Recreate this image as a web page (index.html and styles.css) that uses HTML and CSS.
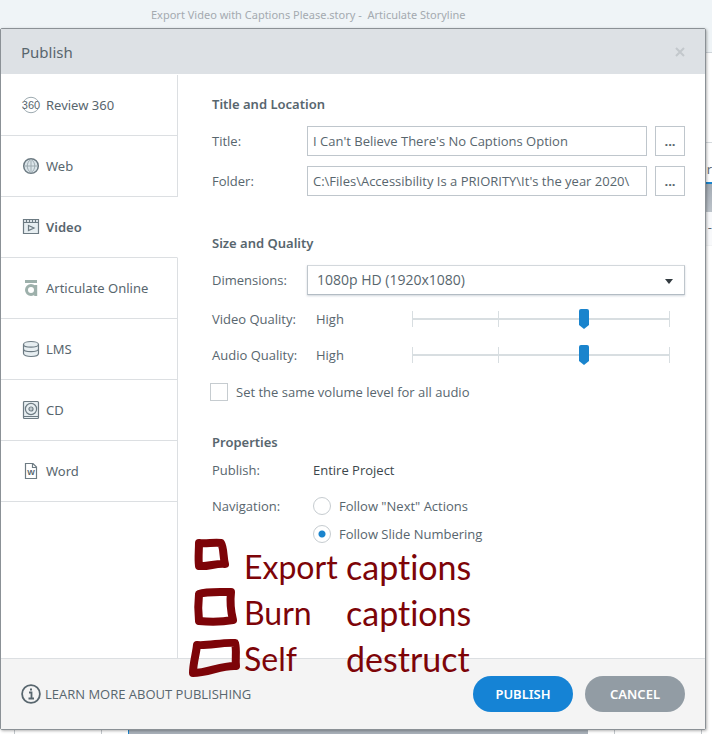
FILE: index.html
```
<!DOCTYPE html>
<html lang="en">
<head>
<meta charset="utf-8">
<title>Publish</title>
<link rel="stylesheet" href="styles.css">
</head>
<body>
<div class="app">
  <div class="app-title">Export Video with Captions Please.story -&nbsp; Articulate Storyline</div>
  <div class="app-ribbon"></div>
  <div class="app-tab">r</div>
  <div class="app-strip"></div>
  <div class="app-tools">-</div>
  <div class="app-bottom">
    <div class="app-list"></div>
    <div class="app-stage"></div>
    <div class="app-panel"></div>
  </div>
</div>

<section class="dialog" role="dialog" aria-labelledby="dialog-title">
  <header class="dialog-head">
    <h1 id="dialog-title">Publish</h1>
    <button class="close" type="button" aria-label="Close">
      <svg width="10" height="10" viewBox="0 0 10 10"><path d="M1 1l8 8M9 1l-8 8"/></svg>
    </button>
  </header>

  <div class="dialog-body">
    <nav class="tabs">
      <a href="#review" class="tab">
        <svg class="icon" viewBox="0 0 20 20"><path class="thin" d="M3 6a8.5 8.5 0 0 1 14 0M3 14a8.500 8.500 0 0 0 14 0"/><text x="10" y="13.600" class="icon-360">360</text></svg>
        Review 360</a>
      <a href="#web" class="tab">
        <svg class="icon" viewBox="0 0 20 20"><circle class="globe" cx="10" cy="10" r="7.3"/><path class="thin" d="M10 3v14M3 10h14M10 3c-5 4-5 10 0 14M10 3c5 4 5 10 0 14"/></svg>
        Web</a>
      <a href="#video" class="tab active">
        <svg class="icon" viewBox="0 0 20 20"><path class="fill" d="M2.500 2.500h15v14h-15z"/><path d="M2.500 5.500h15M5.500 2.500v3M8.500 2.500v3M11.500 2.500v3M14.500 2.500v3M7.500 8.500l5.500 2.500-5.500 2.500z"/></svg>
        Video</a>
      <a href="#online" class="tab">
        <svg class="icon" viewBox="0 0 20 20"><g class="brand"><path d="M4 3.500h12"/><circle cx="10" cy="12" r="4.500"/><path d="M14.700 7v11"/></g></svg>
        Articulate Online</a>
      <a href="#lms" class="tab">
        <svg class="icon" viewBox="0 0 20 20"><path class="fill" d="M2.500 5.500c0-4 15-4 15 0v9c0 4-15 4-15 0z"/><path d="M2.500 5.500c0 3.600 15 3.600 15 0M2.500 10c0 3.600 15 3.600 15 0"/></svg>
        LMS</a>
      <a href="#cd" class="tab">
        <svg class="icon" viewBox="0 0 20 20"><rect class="fill" x="2.500" y="1.500" width="15" height="17" rx="1"/><circle cx="10" cy="9" r="5.600"/><circle cx="10" cy="9" r="2"/><path d="M2.500 16.500h15M10 8.500v1"/></svg>
        CD</a>
      <a href="#word" class="tab">
        <svg class="icon" viewBox="0 0 20 20"><path d="M4.500 2.500h7.500l3.500 3.500v11.500h-11zM11.500 2.500v4h4"/><text x="10" y="14" class="icon-w">W</text></svg>
        Word</a>
    </nav>

    <form class="content" id="publish-form">
      <h2>Title and Location</h2>
      <div class="field">
        <label for="title">Title:</label>
        <input class="box" id="title" type="text" value="I Can't Believe There's No Captions Option">
        <button class="browse" type="button" aria-label="Title details">...</button>
      </div>
      <div class="field">
        <label for="folder">Folder:</label>
        <input class="box" id="folder" type="text" value="C:\Files\Accessibility Is a PRIORITY\It's the year 2020\">
        <button class="browse" type="button" aria-label="Browse folder">...</button>
      </div>

      <h2 class="later">Size and Quality</h2>
      <div class="field wide">
        <label for="dimensions">Dimensions:</label>
        <span class="select-wrap">
          <select class="box" id="dimensions"><option>1080p HD (1920x1080)</option></select>
        </span>
      </div>
      <div class="quality">
        <label for="vq">Video Quality:</label><output for="vq">High</output>
        <input id="vq" type="range" min="0" max="3" value="2">
        <label for="aq">Audio Quality:</label><output for="aq">High</output>
        <input id="aq" type="range" min="0" max="3" value="2">
      </div>
      <label class="check"><input type="checkbox">Set the same volume level for all audio</label>

      <h2 class="last">Properties</h2>
      <dl class="properties">
        <dt>Publish:</dt>
        <dd class="scope">Entire Project</dd>
        <dt>Navigation:</dt>
        <dd class="choices">
          <label class="choice"><input type="radio" name="nav">Follow "Next" Actions</label>
          <label class="choice"><input type="radio" name="nav" checked>Follow Slide Numbering</label>
        </dd>
      </dl>

      <div class="notes">
        <div class="note">
          <svg viewBox="0 0 50 46"><path class="pen" d="M10 3c7 1 15-1 22 0 3 5 2 14 4 21-9-1-17 3-26 2-1-8 0-15 0-23z"/></svg>
          <span>Export</span><span>captions</span>
        </div>
        <div class="note">
          <svg viewBox="0 0 50 46"><path class="pen" d="M10 8c8-3 22-2 32-2-1 9 0 20 2 28-11 2-23 2-34 1-1-9-1-18 0-27z"/></svg>
          <span>Burn</span><span>captions</span>
        </div>
        <div class="note">
          <svg viewBox="0 0 50 46"><path class="pen" d="M8 13c12 1 25-3 38-2 2 8 0 15 1 23-14-1-28 7-43 7 0-10 3-18 4-28z"/></svg>
          <span>Self</span><span>destruct</span>
        </div>
      </div>
    </form>
  </div>

  <footer class="dialog-foot">
    <a class="learn" href="#learn">
      <svg width="20" height="20" viewBox="0 0 20 20"><circle cx="10" cy="10" r="8.900"/><path d="M8 8.500h2.500v5.500M7.500 14.500h5.500"/><path class="dot" d="M9 4.500h2v2h-2z"/></svg>
      LEARN MORE ABOUT PUBLISHING</a>
    <button class="pill primary" type="submit" form="publish-form">PUBLISH</button>
    <button class="pill" type="button">CANCEL</button>
  </footer>
</section>
</body>
</html>
```
FILE: styles.css
```
* { box-sizing: border-box; }

body {
  margin: 0;
  padding: 28px 6px 4px 0;
  min-height: 100vh;
  position: relative;
  font: 13px/18px "Open Sans", "Noto Sans", sans-serif;
  color: #58666e;
  background: #fff;
}

h1, h2, dl, dd { margin: 0; }
button, input, select { font: inherit; color: inherit; margin: 0; }
svg { flex: none; fill: none; }

/* Main window behind the dialog */
.app {
  position: absolute;
  inset: 0;
  display: flex;
  flex-direction: column;
  overflow: hidden;
}
.app-title {
  flex: 0 0 53px;
  padding: 6px 0 0 151px;
  font-family: "Noto Sans", sans-serif;
  font-size: 11px;
  color: #a4aab0;
  background: #eff4f7;
  border-bottom: 1px solid #cfd5da;
}
.app-ribbon { flex: 0 0 90px; border-bottom: 1px solid #d5dade; }
.app-tab {
  flex: 0 0 41px;
  padding: 17px 0 0;
  text-align: right;
  border-bottom: 2px solid #1a84cd;
}
.app-strip { flex: 0 0 28px; background: linear-gradient(#a3abb4, #bcc3ca); }
.app-tools { flex: 1; padding-top: 6px; text-align: right; background: linear-gradient(#f8f9fb 33px, #e3e6e9 33px, #fff 34px); }
.app-bottom { flex: 0 0 10px; display: flex; background: #fff; }
.app-list { flex: 0 0 88px; margin: 0 26px 0 14px; border: solid #c3c8cc; border-width: 0 1px; }
.app-stage { flex: 1; background: #a9b1ba; border-left: 1px solid #1a84cd; }
.app-panel { flex: 0 0 88px; margin: 0 10px 0 26px; border: solid #c3c8cc; border-width: 0 1px; }

/* Dialog */
.dialog {
  position: relative;
  background: #fff;
  border: 1px solid #8b9196;
  border-radius: 2px;
  box-shadow: 1px 1px 3px rgba(0, 0, 0, .3);
}
.dialog-head {
  display: flex;
  align-items: center;
  justify-content: space-between;
  height: 45px;
  padding: 0 20px;
  background: #dde1e5;
}
.dialog-head h1 { font: 400 15px/18px "Noto Sans", sans-serif; }
.close { display: flex; padding: 0; border: 0; background: none; }
.close svg { stroke: #c3c8cc; stroke-width: 2; }

.dialog-body { display: grid; grid-template-columns: 177px 1fr; }

/* Publish targets */
.tabs {
  display: flex;
  flex-direction: column;
  padding-top: 1px;
  font-family: "Noto Sans", sans-serif;
}
.tabs::after { content: ""; flex: 1; border-right: 1px solid #dcdfe2; }
.tab {
  display: flex;
  align-items: center;
  gap: 5px;
  height: 61px;
  padding-left: 20px;
  border: solid #dcdfe2;
  border-width: 0 1px 1px 0;
  color: inherit;
  text-decoration: none;
}
.tab.active { font-weight: 600; border-right-color: transparent; }
.icon { width: 20px; height: 20px; stroke: #6d7b83; stroke-width: 1.2; }
.icon text {
  fill: #58666e;
  stroke: none;
  text-anchor: middle;
  font-family: "Liberation Sans", sans-serif;
}
.icon .icon-360 { font-size: 11px; }
.icon .icon-w { font-size: 8px; font-weight: 700; }
.icon .thin { stroke: #9eabb1; stroke-width: 1; }
.icon .globe { fill: #dbe5ea; stroke-width: 1.5; }
.icon .fill { fill: #e7eef1; }
.icon .brand { stroke: #9db0ab; stroke-width: 3; }

/* Settings */
.content { position: relative; padding: 21px 20px 115px 34px; }
h2 { font: 600 13px/18px "Noto Sans", sans-serif; }
h2.later { margin-top: 38px; }
h2.last { margin-top: 32px; }

.field {
  display: grid;
  grid-template-columns: 87px 1fr 30px;
  gap: 8px;
  align-items: center;
  margin-top: 10px;
}
h2 + .field { margin-top: 13px; }
.field.wide { grid-template-columns: 87px 1fr; }
.box {
  width: 100%;
  height: 30px;
  padding: 0 5px;
  border: 1px solid #bfc6cc;
  border-radius: 0;
  background: #fff;
}
.browse { height: 30px; padding: 0; border: 1px solid #bfc6cc; background: #fff; font-weight: 700; }

.select-wrap { position: relative; display: flex; }
.select-wrap::after {
  content: "";
  position: absolute;
  right: 12px;
  top: 14px;
  border: 4px solid transparent;
  border-top: 5px solid #333b40;
}
select.box {
  appearance: none;
  padding: 0 9px;
  font-size: 14px;
  border-color: #d3d8dc #bfc6cc #b3bcc4;
  box-shadow: 0 1px 2px rgba(100, 120, 140, .3);
}

.quality {
  display: grid;
  grid-template-columns: 96px 1fr 268px;
  column-gap: 8px;
  row-gap: 12px;
  align-items: center;
  margin: 12px 10px 0 0;
}
input[type="range"] {
  appearance: none;
  width: 100%;
  height: 24px;
  background:
    linear-gradient(#d8dee1, #d8dee1) 5px 50% / 1px 16px,
    linear-gradient(#d8dee1, #d8dee1) calc(33.3% + 2px) 50% / 1px 16px,
    linear-gradient(#d8dee1, #d8dee1) calc(100% - 5px) 50% / 1px 16px,
    linear-gradient(#d8dee1, #d8dee1) 50% 50% / calc(100% - 10px) 2px;
  background-repeat: no-repeat;
}
input[type="range"]::-webkit-slider-thumb {
  appearance: none;
  width: 10px;
  height: 20px;
  border-radius: 2px;
  background: #1a84cd;
  clip-path: polygon(0 0, 100% 0, 100% 80%, 50% 100%, 0 80%);
}

.check, .choice { display: flex; align-items: center; gap: 8px; }
.check { margin: 16px 0 0 -2px; }
input[type="checkbox"], input[type="radio"] {
  appearance: none;
  flex: none;
  width: 18px;
  height: 18px;
  border: 1px solid #c6ccd0;
  background: #fff;
}
input[type="radio"] { border-radius: 50%; }
input[type="radio"]:checked { background: radial-gradient(circle, #1a84cd 3px, #fff 4px); }

.properties {
  display: grid;
  grid-template-columns: 101px 1fr;
  row-gap: 18px;
  margin-top: 10px;
}
.scope { color: #3c474d; }
.choices { display: grid; gap: 10px; }

/* Pen marks over the form */
.notes { position: absolute; z-index: 1; left: 11px; top: 466px; color: #7d0408; }
.note {
  display: grid;
  grid-template-columns: 50px 97px auto;
  column-gap: 5px;
  height: 46px;
  font: 32px/54px Lato, sans-serif;
  font-variant-ligatures: none;
}
.note svg { height: 46px; overflow: visible; }
.note span:last-child { font-size: 34px; }
.pen { stroke: #7d0408; stroke-width: 8; stroke-linejoin: round; }

/* Actions */
.dialog-foot {
  display: flex;
  align-items: center;
  gap: 12px;
  height: 71px;
  padding: 0 20px;
  background: #f4f4f4;
  border-top: 1px solid #dcdfe2;
}
.learn {
  display: flex;
  align-items: center;
  gap: 4px;
  margin-right: auto;
  color: inherit;
  text-decoration: none;
}
.learn svg { stroke: #58666e; stroke-width: 1.8; }
.learn .dot { fill: #58666e; stroke: none; }
.pill {
  width: 100px;
  height: 36px;
  padding: 0;
  border: 0;
  border-radius: 18px;
  font-family: "Noto Sans", sans-serif;
  font-weight: 600;
  color: #fff;
  background: #929ca4;
}
.pill.primary { background: #1583d5; }
```
